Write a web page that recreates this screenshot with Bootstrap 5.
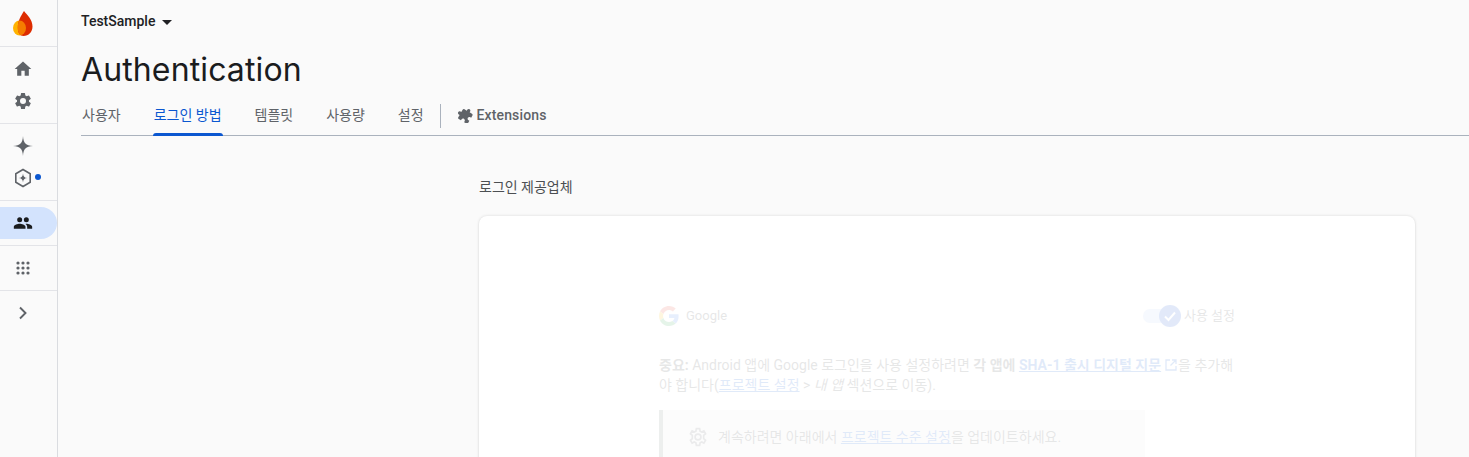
<!DOCTYPE html>
<html lang="ko">
<head>
<meta charset="utf-8">
<title>Authentication</title>
<link href="https://cdn.jsdelivr.net/npm/bootstrap@5.3.0/dist/css/bootstrap.min.css" rel="stylesheet">
<style>
html,body{height:457px;overflow:hidden}
body{background:#fafafa;font-family:Roboto,"Noto Sans CJK KR",sans-serif;font-size:14px;color:#5f6368}
.rail{width:58px;height:457px;border-right:1px solid #dadce0;flex:none}
.rail-group{border-bottom:1px solid #e3e4e8;display:flex;flex-direction:column;align-items:center}
.rail-logo{height:47px;justify-content:center}
.rail-tools{height:77px;padding-top:6px}
.rail-ai{height:77px;padding-top:6px}
.rail-auth{height:45px;padding-top:6px;align-items:stretch}
.rail-more{height:45px;justify-content:center}
.rail-last{height:44px}
.rail-slot{height:32px;width:100%;display:flex;align-items:center;justify-content:center;position:relative;padding-right:11px}
.rail-active{background:#d3e3fd;border-radius:0 16px 16px 0;width:57px}
.rail-dot{position:absolute;left:35px;top:12px;width:6px;height:6px;border-radius:50%;background:#0b57d0}
.rail-pad{padding-right:11px}
.main-pane{flex:1;min-width:0;padding-left:23px}
.project-row{height:46px;padding-bottom:4px;font-weight:500;color:#202124;font-size:14px}
.caret-shape{width:0;height:0;border-left:5px solid transparent;border-right:5px solid transparent;border-top:5px solid #202124;margin-left:7px;margin-top:2px}
.page-title{font-family:Inter,sans-serif;font-size:32px;font-weight:400;color:#1a1c1e;line-height:47px;margin:0;letter-spacing:.12px}
.tabs-row{height:43px;border-bottom:1px solid #aab2bd}
.tab-item{height:42px;display:flex;align-items:center;padding:2px 1px 0;color:#5f6368;text-decoration:none;position:relative}
.tab-on{color:#0b57d0}
.tab-on::after{content:"";position:absolute;left:0;right:0;bottom:-1px;height:3px;background:#0b57d0;border-radius:3px 3px 0 0}
.tab-sep{width:1px;height:24px;background:#aab2bd;margin-top:11px}
.ext-tab{font-weight:500;letter-spacing:.13px}
.ext-tab svg{margin-right:4px}
.body-pane{margin-left:398px;width:936px;padding-top:41px}
.section-label{font-size:14px;line-height:20px;color:#4c4f52;margin-bottom:19px}
.provider-card{background:#fff;border-radius:8px;box-shadow:0 0 3px rgba(0,0,0,.14),0 1px 2px rgba(0,0,0,.05);height:300px;padding:88px 180px 0}
.faded{opacity:.12;color:#3c4043}
.provider-row{height:24px}
.provider-name{font-size:13px;margin-left:7px}
.switch-track{width:34px;height:14px;border-radius:7px;background:#7baaf7;position:relative;opacity:.55}
.switch-wrap{position:relative;width:34px;height:20px;margin-right:3px}
.switch-knob{position:absolute;right:-4px;top:-1px;width:22px;height:22px;border-radius:50%;background:#1a56d6;display:flex;align-items:center;justify-content:center}
.switch-label{font-size:13px;margin-left:4px}
.info-text{margin:27px 0 0;line-height:20px;width:590px}
.info-text a,.notice-box a{color:#0b57d0}
.ext-mark{margin-left:3px;vertical-align:-2px}
.notice-box{margin-top:15px;border-left:4px solid #6f7f7c;background:#ededed;width:486px;height:60px;padding:17px 0 0 25px}
.notice-box svg{margin-right:10px}
</style>
</head>
<body>
<div class="d-flex">
  <nav class="rail">
    <div class="rail-group rail-logo rail-pad">
      <svg width="20" height="25" viewBox="0 0 20 25">
        <defs><clipPath id="yolk"><path d="M0 17a6.500 7.500 0 1 0 13 0 6.500 7.500 0 1 0-13 0z"/></clipPath></defs>
        <path d="M0 17a6.500 7.500 0 1 0 13 0 6.500 7.500 0 1 0-13 0z" fill="#ffb300"/>
        <path d="M11 0c3.500 4.500 8.500 8.500 8.500 15.500 0 5.500-3.800 9.500-9 9.500-3.600 0-5.700-3-5.700-8.500C4.800 9.500 8 5 11 0z" fill="#dd2c00"/>
        <path clip-path="url(#yolk)" d="M11 0c3.500 4.500 8.500 8.500 8.500 15.500 0 5.500-3.800 9.500-9 9.500-3.600 0-5.700-3-5.700-8.500C4.800 9.500 8 5 11 0z" fill="#f57c00"/>
      </svg>
    </div>
    <div class="rail-group rail-tools">
      <div class="rail-slot"><svg width="20" height="20" viewBox="0 0 24 24" fill="#5f6368"><path d="M10 20v-6h4v6h5v-8h3L12 3 2 12h3v8z"/></svg></div>
      <div class="rail-slot"><svg width="20" height="20" viewBox="0 0 24 24" fill="#5f6368"><path d="M19.140 12.940c.04-.3.060-.61.060-.94s-.02-.64-.07-.94l2.030-1.580a.49.49 0 0 0 .12-.61l-1.920-3.320a.49.49 0 0 0-.59-.22l-2.390.96a7 7 0 0 0-1.620-.94l-.36-2.540a.48.48 0 0 0-.48-.41h-3.840a.47.47 0 0 0-.47.41l-.36 2.540c-.59.24-1.130.57-1.620.94l-2.390-.96a.48.48 0 0 0-.59.22L2.730 8.870a.47.47 0 0 0 .12.61l2.030 1.580c-.05.3-.09.63-.09.94s.02.640.07.94l-2.030 1.580a.49.49 0 0 0-.12.61l1.920 3.320c.12.22.37.29.59.22l2.390-.96c.5.380 1.030.7 1.620.94l.36 2.540c.05.24.24.41.48.41h3.840c.24 0 .44-.17.47-.41l.36-2.540c.59-.24 1.130-.56 1.620-.94l2.390.96c.22.08.47 0 .59-.22l1.920-3.320a.47.47 0 0 0-.12-.61zM12 15.600a3.600 3.600 0 1 1 0-7.200 3.600 3.600 0 0 1 0 7.200z"/></svg></div>
    </div>
    <div class="rail-group rail-ai">
      <div class="rail-slot"><svg width="20" height="20" viewBox="0 0 22 22" fill="#5f6368"><path d="M11 0C11.500 8 14 10.500 22 11 14 11.500 11.500 14 11 22 10.500 14 8 11.500 0 11 8 10.500 10.500 8 11 0z"/></svg></div>
      <div class="rail-slot"><svg width="20" height="20" viewBox="0 0 20 20" fill="none" stroke="#5f6368" stroke-width="1.600"><path d="M10 1.500l7.200 4.250v8.500L10 18.500l-7.200-4.250v-8.500z"/><path d="M10 5.500c.2 3 1.500 4.300 4.500 4.500-3 .2-4.300 1.500-4.500 4.500-.2-3-1.500-4.300-4.500-4.500 3-.2 4.300-1.500 4.500-4.500z" fill="#5f6368" stroke="none"/></svg><span class="rail-dot"></span></div>
    </div>
    <div class="rail-group rail-auth">
      <div class="rail-slot rail-active"><svg width="20" height="20" viewBox="0 0 24 24" fill="#1a1c1e"><path d="M16 11a3 3 0 1 0 0-6 3 3 0 0 0 0 6zm-8 0a3 3 0 1 0 0-6 3 3 0 0 0 0 6zm0 2c-2.300 0-7 1.200-7 3.500V19h14v-2.500C15 14.200 10.300 13 8 13zm8 0c-.3 0-.6 0-1 .1 1.200.8 2 2 2 3.400V19h6v-2.500c0-2.300-4.700-3.500-7-3.500z"/></svg></div>
    </div>
    <div class="rail-group rail-more rail-pad">
      <svg width="14" height="14" viewBox="0 0 14 14" fill="#5f6368"><circle cx="2" cy="2" r="1.600"/><circle cx="7" cy="2" r="1.600"/><circle cx="12" cy="2" r="1.600"/><circle cx="2" cy="7" r="1.600"/><circle cx="7" cy="7" r="1.600"/><circle cx="12" cy="7" r="1.600"/><circle cx="2" cy="12" r="1.600"/><circle cx="7" cy="12" r="1.600"/><circle cx="12" cy="12" r="1.600"/></svg>
    </div>
    <div class="rail-last rail-pad d-flex justify-content-center align-items-center">
      <svg width="20" height="20" viewBox="0 0 20 20" fill="none" stroke="#5f6368" stroke-width="1.900"><path d="M7 4.500l5.500 5.500L7 15.500"/></svg>
    </div>
  </nav>
  <main class="main-pane">
    <div class="project-row d-flex align-items-center">TestSample<span class="caret-shape"></span></div>
    <h1 class="page-title">Authentication</h1>
    <div class="tabs-row d-flex gap-4">
      <a class="tab-item" href="#" style="margin-right:7px">사용자</a>
      <a class="tab-item tab-on" href="#" style="margin-right:7px">로그인 방법</a>
      <a class="tab-item" href="#" style="margin-right:7px">템플릿</a>
      <a class="tab-item" href="#" style="margin-right:7px">사용량</a>
      <a class="tab-item" href="#" style="margin-right:-9px">설정</a>
      <span class="tab-sep"></span>
      <a class="tab-item ext-tab" href="#" style="margin-left:-9px"><svg width="16" height="16" viewBox="0 0 24 24" fill="#5f6368"><path transform="rotate(-60 12 12)" d="M20.500 11H19V7c0-1.100-.9-2-2-2h-4V3.500C13 2.120 11.880 1 10.500 1S8 2.120 8 3.500V5H4c-1.100 0-1.990.9-1.990 2v3.800H3.500c1.490 0 2.700 1.210 2.700 2.700s-1.210 2.700-2.700 2.700H2V20c0 1.100.9 2 2 2h3.800v-1.500c0-1.490 1.210-2.700 2.700-2.700 1.490 0 2.700 1.210 2.700 2.700V22H17c1.100 0 2-.9 2-2v-4h1.500c1.380 0 2.500-1.120 2.500-2.500S21.880 11 20.500 11z"/></svg>Extensions</a>
    </div>
    <div class="body-pane">
      <div class="section-label">로그인 제공업체</div>
      <section class="provider-card">
        <div class="faded">
          <div class="provider-row d-flex align-items-center justify-content-between">
            <div class="d-flex align-items-center">
              <svg width="20" height="20" viewBox="0 0 48 48"><path fill="#EA4335" d="M24 9.500c3.500 0 6.700 1.200 9.200 3.600l6.900-6.900C35.900 2.400 30.500 0 24 0 14.600 0 6.500 5.400 2.600 13.200l8 6.200C12.400 13.700 17.700 9.500 24 9.500z"/><path fill="#4285F4" d="M47 24.500c0-1.600-.1-3.100-.4-4.500H24v9h12.900c-.6 3-2.200 5.500-4.700 7.200l7.700 6C44.400 38 47 31.800 47 24.500z"/><path fill="#FBBC05" d="M10.500 28.600c-.5-1.400-.8-3-.8-4.600s.3-3.200.8-4.600l-8-6.200C.9 16.500 0 20.100 0 24s.9 7.500 2.600 10.800z"/><path fill="#34A853" d="M24 48c6.500 0 11.900-2.100 15.900-5.800l-7.700-6c-2.200 1.400-4.900 2.300-8.200 2.300-6.300 0-11.600-4.200-13.500-10l-8 6.200C6.500 42.600 14.600 48 24 48z"/></svg>
              <span class="provider-name">Google</span>
            </div>
            <div class="d-flex align-items-center">
              <span class="switch-wrap d-flex align-items-center"><span class="switch-track d-block"></span><span class="switch-knob"><svg width="14" height="14" viewBox="0 0 14 14" fill="none" stroke="#fff" stroke-width="2"><path d="M2 7.500l3.500 3.500L12 3.500"/></svg></span></span>
              <span class="switch-label">사용 설정</span>
            </div>
          </div>
          <p class="info-text"><strong>중요:</strong> Android 앱에 Google 로그인을 사용 설정하려면 <strong>각 앱에 <a href="#">SHA-1 출시 디지털 지문</a></strong><svg class="ext-mark" width="14" height="14" viewBox="0 0 14 14" fill="none" stroke="#0b57d0" stroke-width="1.300"><path d="M6 2H2v10h10V8M8 2h4v4M12 2L6.500 7.500"/></svg>을 추가해<br>야 합니다(<a href="#">프로젝트 설정</a> &gt; <em>내 앱</em> 섹션으로 이동).</p>
          <div class="notice-box d-flex align-items-start">
            <svg width="20" height="20" viewBox="0 0 24 24" fill="none" stroke="#5f6368" stroke-width="2"><circle cx="12" cy="12" r="3.500"/><path d="M10 2h4l.5 3 2 1 2.600-1.300 2 3.400L18.800 10v4l2.300 1.900-2 3.400-2.600-1.300-2 1L14 22h-4l-.5-3-2-1-2.600 1.300-2-3.400L5.200 14v-4L2.900 8.100l2-3.400L7.500 6l2-1z"/></svg>
            <span>계속하려면 아래에서 <a href="#">프로젝트 수준 설정</a>을 업데이트하세요.</span>
          </div>
        </div>
      </section>
    </div>
  </main>
</div>
<script src="https://cdn.jsdelivr.net/npm/bootstrap@5.3.0/dist/js/bootstrap.bundle.min.js"></script>
</body>
</html>
